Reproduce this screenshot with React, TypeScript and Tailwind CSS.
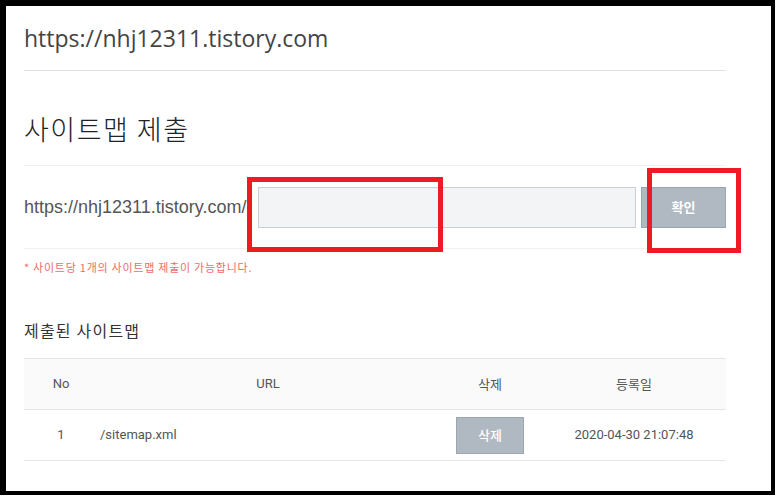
export default function App() {
  const kr = "font-['Noto_Sans_CJK_KR',sans-serif]";
  return (
    <div className="relative w-[777px] h-[499px] bg-white overflow-hidden">
      <div className="w-[775px] h-[495px] border-black border-t-[6px] border-l-[6px] border-r-[4px] border-b-[4px] pl-[18px]">
        <div className="w-[702px]">
          {/* Header */}
          <div className="h-[65px] flex items-center border-b border-[#e3e3e3]">
            <span className="font-['Open_Sans',sans-serif] text-[23px] text-[#444] leading-none">https://nhj12311.tistory.com</span>
          </div>
          {/* Title */}
          <div className="pt-[40px] pb-[18px] border-b border-[#f0f0f0]">
            <h1 className={`${kr} text-[27px] tracking-[1.5px] leading-[36px] text-[#222] font-light`}>사이트맵 제출</h1>
          </div>
          {/* Form row */}
          <div className="h-[83px] flex items-center border-b border-[#f0f0f0]">
            <span className="font-['Liberation_Sans',sans-serif] text-[18px] text-[#555] w-[234px] shrink-0 whitespace-nowrap">https://nhj12311.tistory.com/</span>
            <div className="w-[378px] h-[41px] bg-[#f3f4f6] border border-[#c9cfd6]" />
            <button className={`${kr} ml-[5px] w-[85px] h-[41px] bg-[#b0b9c2] border border-[#9ca6b0] text-white text-[13px] font-bold`}>확인</button>
          </div>
          {/* Note */}
          <p className={`${kr} mt-[11px] text-[11px] tracking-[0.75px] leading-[14px] text-[#f26a6a]`}>* 사이트당 1개의 사이트맵 제출이 가능합니다.</p>
          {/* Subtitle */}
          <h2 className={`${kr} mt-[46px] text-[16px] tracking-[1.2px] leading-[20px] text-[#333] font-normal`}>제출된 사이트맵</h2>
          {/* Table */}
          <div className="mt-[18px] border-t border-[#e6e6e6]">
            <div className="flex h-[51px] items-center bg-[#fafafa] border-b border-[#e6e6e6] text-[13px] text-[#555]">
              <div className="w-[74px] text-center font-['Roboto',sans-serif]">No</div>
              <div className="w-[340px] text-center font-['Roboto',sans-serif]">URL</div>
              <div className={`w-[104px] text-center ${kr}`}>삭제</div>
              <div className={`w-[184px] text-center ${kr}`}>등록일</div>
            </div>
            <div className="flex h-[51px] items-center border-b border-[#e6e6e6] text-[13px] text-[#555]">
              <div className="w-[74px] text-center font-['Roboto',sans-serif]">1</div>
              <div className="w-[340px] pl-[2px] font-['Roboto',sans-serif]">/sitemap.xml</div>
              <div className="w-[104px] flex justify-center">
                <button className={`${kr} w-[68px] h-[37px] bg-[#b0b9c2] border border-[#9ca6b0] text-white text-[13px] font-medium`}>삭제</button>
              </div>
              <div className="w-[184px] text-center font-['Roboto',sans-serif]">2020-04-30 21:07:48</div>
            </div>
          </div>
        </div>
      </div>
      {/* Red annotation boxes */}
      <div className="absolute left-[247px] top-[177px] w-[196px] h-[75px] border-[5px] border-[#ed1c24]" />
      <div className="absolute left-[647px] top-[168px] w-[94px] h-[85px] border-[5px] border-[#ed1c24]" />
    </div>
  );
}
